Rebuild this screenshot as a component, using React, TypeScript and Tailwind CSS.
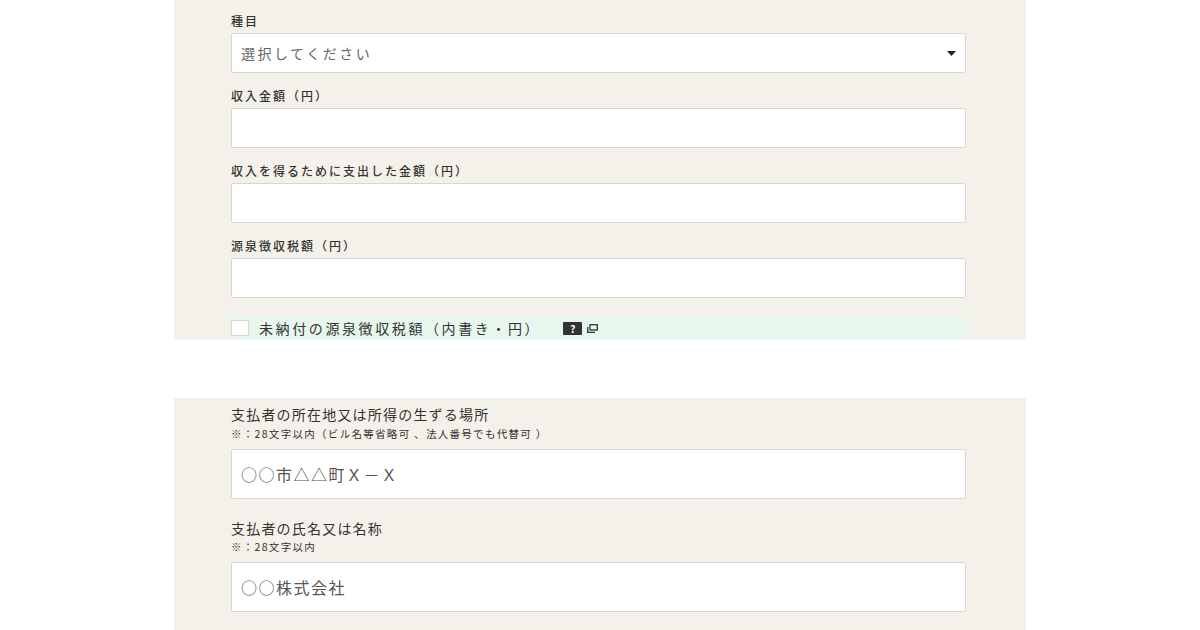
export default function App() {
  const f = { fontFamily: '"Noto Sans CJK JP", "Noto Sans", sans-serif' };
  const Label = ({ t }: { t: string }) => (
    <div className="text-[12px] text-[#333] h-[20px] leading-[20px] font-medium tracking-[2px]">{t}</div>
  );
  const Input = () => <div className="h-[40px] bg-white border border-[#d9d6cf] rounded-[2px]" />;
  return (
    <div className="w-[1200px] h-[630px] bg-white overflow-hidden" style={f}>
      <div className="ml-[174px] w-[852px] h-[340px] bg-[#f4f1ea] pl-[57px] pr-[60px] pt-[11px]">
        <Label t="種目" />
        <div className="mt-[2px] h-[40px] bg-white border border-[#d9d6cf] rounded-[2px] flex items-center justify-between px-[9px]">
          <span className="text-[14px] text-[#666] tracking-[2.5px]">選択してください</span>
          <svg width="9" height="5" viewBox="0 0 9 5"><path d="M0 0h9L4.5 5z" fill="#222" /></svg>
        </div>
        <div className="mt-[13px]"><Label t="収入金額（円）" /></div>
        <div className="mt-[2px]"><Input /></div>
        <div className="mt-[13px]"><Label t="収入を得るために支出した金額（円）" /></div>
        <div className="mt-[2px]"><Input /></div>
        <div className="mt-[13px]"><Label t="源泉徴収税額（円）" /></div>
        <div className="mt-[2px]"><Input /></div>
        <div className="mt-[18px] h-[24px] bg-[#e8f7ee] flex items-center">
          <div className="w-[18px] h-[16px] bg-white border border-[#d9d6cf] rounded-[2px]" />
          <span className="ml-[10px] text-[14px] text-[#333] tracking-[2.6px]">未納付の源泉徴収税額（内書き・円）</span>
          <span className="ml-[22px] w-[19px] h-[13px] bg-[#333] text-white text-[10px] font-bold leading-[13px] text-center rounded-[1px]">?</span>
          <svg className="ml-[5px]" width="11" height="9" viewBox="0 0 11 9"><rect x="3" y="0.7" width="7.3" height="5.3" fill="none" stroke="#333" strokeWidth="1.3"/><path d="M0.7 3v5.3h7.3" fill="none" stroke="#333" strokeWidth="1.3"/></svg>
        </div>
      </div>
      <div className="mt-[58px] ml-[174px] w-[852px] h-[232px] bg-[#f4f1ea] pl-[57px] pr-[60px] pt-[6px]">
        <div className="text-[14px] text-[#333] h-[20px] leading-[20px] tracking-[1.2px]">支払者の所在地又は所得の生ずる場所</div>
        <div className="mt-[3px] text-[10.5px] text-[#333] h-[14px] leading-[14px] tracking-[1.3px]">※：28文字以内（ビル名等省略可 、法人番号でも代替可 ）</div>
        <div className="mt-[8px] h-[50px] bg-white border border-[#d9d6cf] rounded-[2px] flex items-center px-[9px] text-[16px] text-[#555] tracking-[1.5px]">○○市△△町Ｘ－Ｘ</div>
        <div className="mt-[19px] text-[14px] text-[#333] h-[20px] leading-[20px] tracking-[1.2px]">支払者の氏名又は名称</div>
        <div className="mt-[2px] text-[10.5px] text-[#333] h-[14px] leading-[14px] tracking-[1.3px]">※：28文字以内</div>
        <div className="mt-[8px] h-[50px] bg-white border border-[#d9d6cf] rounded-[2px] flex items-center px-[9px] text-[16px] text-[#555] tracking-[1.5px]">○○株式会社</div>
      </div>
    </div>
  );
}
